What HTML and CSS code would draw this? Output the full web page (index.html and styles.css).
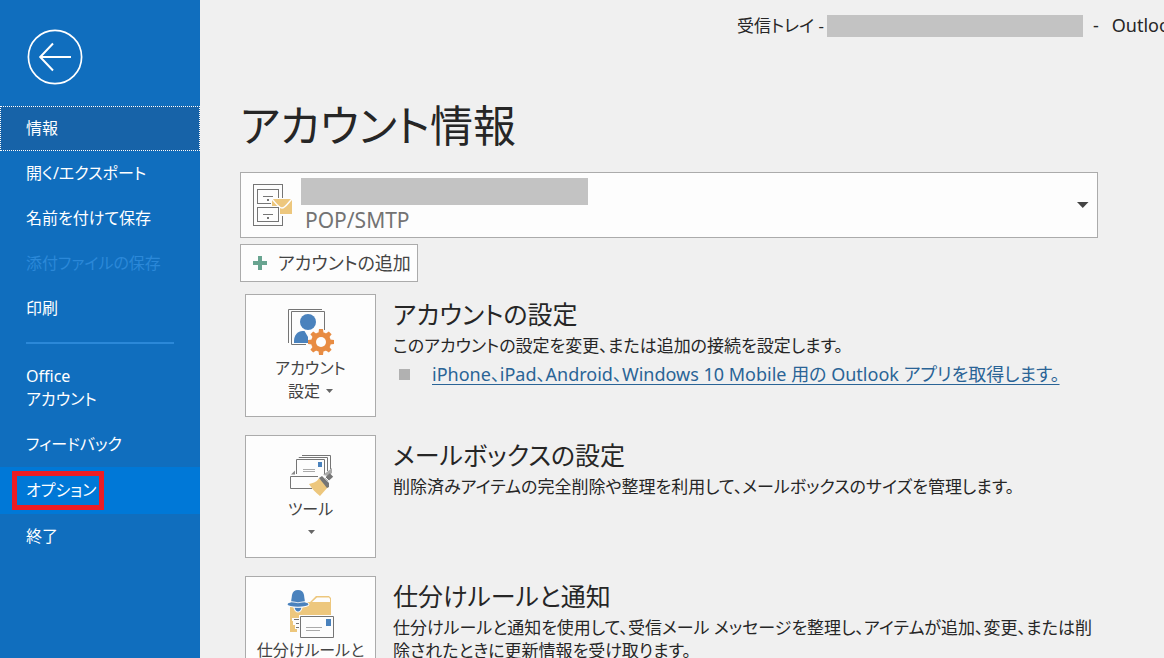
FILE: index.html
```html
<!DOCTYPE html>
<html lang="ja">
<head>
<meta charset="utf-8">
<title>アカウント情報 - Outlook</title>
<link rel="stylesheet" href="styles.css">
</head>
<body>
<div class="app">
  <nav class="sidebar" aria-label="ファイル">
    <button class="back" type="button" aria-label="戻る">
      <svg width="56" height="56" viewBox="0 0 56 56" fill="none" stroke="#fff" stroke-width="1.7">
        <circle cx="28" cy="28" r="26.6"/>
        <path d="M44 28H14M26 14.500L13.200 28L26 41.500" stroke-width="2"/>
      </svg>
    </button>
    <button class="item current" type="button">情報</button>
    <button class="item" type="button">開く/エクスポート</button>
    <button class="item" type="button">名前を付けて保存</button>
    <button class="item" type="button" disabled>添付ファイルの保存</button>
    <button class="item" type="button">印刷</button>
    <hr class="divider">
    <button class="item" type="button">Office<br>アカウント</button>
    <button class="item" type="button">フィードバック</button>
    <button class="item hover" type="button"><span class="marked">オプション</span></button>
    <button class="item" type="button">終了</button>
  </nav>

  <main class="content">
    <header class="titlebar">
      <span class="folder">受信トレイ -</span><span class="mask title-mask"></span><span class="dash">-</span><span>Outlook</span>
    </header>

    <h1 class="heading">アカウント情報</h1>

    <button class="account" type="button">
      <svg width="40" height="44" viewBox="0 0 40 44" fill="none" stroke="#757575">
        <rect x=".5" y="1.500" width="29" height="41"/>
        <rect x="4.500" y="6.500" width="21" height="14"/>
        <path d="M10 13.500h10"/>
        <rect x="14" y="16" width="2" height="2" fill="#757575" stroke="none"/>
        <path d="M18 15h22v18H18z" fill="#fdfdfd" stroke="none"/>
        <path d="M19 16h20v15H19z" fill="#edc77d" stroke="none"/>
        <path d="M18.500 15.500c3 3 7 9.500 10.500 9.500s7-6.500 10.500-9.500" stroke="#fdfdfd" stroke-width="1.500"/>
        <path d="M3 23h24v17H3z" fill="#fdfdfd" stroke="none"/>
        <rect x="4.500" y="24.500" width="21" height="14"/>
        <path d="M10 31.500h10"/>
        <rect x="14" y="34" width="2" height="2" fill="#757575" stroke="none"/>
      </svg>
      <span class="account-text"><span class="mask account-mask"></span><span class="protocol">POP/SMTP</span></span>
      <svg width="12" height="6" viewBox="0 0 12 6"><path d="M0 0h11.500L5.750 6z" fill="#444"/></svg>
    </button>

    <button class="add" type="button">
      <svg width="14" height="14" viewBox="0 0 14 14"><path d="M5 0h4v5h5v4H9v5H5V9H0V5h5z" fill="#68a490"/></svg>
      <span>アカウントの追加</span>
    </button>

    <section class="row">
      <button class="tile" type="button">
        <svg width="48" height="48" viewBox="0 0 48 48" fill="none" stroke="#757575">
          <path d="M1.500 35V1.500H35"/>
          <path d="M19 36.500H4.500V3.500h33V22"/>
          <circle cx="21" cy="14" r="8" fill="#4a82bd" stroke="none"/>
          <path d="M7 35v-2c0-6 4-10 8.500-10h2l3.500 6v6z" fill="#4a82bd" stroke="none"/>
          <g transform="translate(34 34)">
            <circle r="11.500" fill="#fdfdfd" stroke="none"/>
            <g fill="#e88c43" stroke="none">
              <circle r="10"/>
              <path id="tooth" d="M-2.500-9L-2-13H2L2.500-9V9L2 13H-2L-2.500 9z"/>
              <use href="#tooth" transform="rotate(45)"/>
              <use href="#tooth" transform="rotate(90)"/>
              <use href="#tooth" transform="rotate(135)"/>
            </g>
            <circle r="5" fill="#fdfdfd" stroke="none"/>
          </g>
        </svg>
        <span>アカウント<br>設定 <svg class="caret" width="7" height="4" viewBox="0 0 7 4"><path d="M0 0h7L3.500 4z" fill="#666"/></svg></span>
      </button>
      <div class="info">
        <h2>アカウントの設定</h2>
        <p>このアカウントの設定を変更、または追加の接続を設定します。</p>
        <ul><li><a href="#">iPhone、iPad、Android、Windows 10 Mobile 用の Outlook アプリを取得します。</a></li></ul>
      </div>
    </section>

    <section class="row">
      <button class="tile" type="button">
        <svg width="48" height="48" viewBox="0 0 48 48" fill="none" stroke="#757575">
          <path d="M15 6.500h28.500V20M12 9V8.500h28.500V22"/>
          <path d="M9.500 25V10.500h28V25"/>
          <path d="M3.500 27.500V39.500H25M3.500 27.500H31"/>
          <path d="M4 25.500l4-4v4z" fill="#888" stroke="none"/>
          <path d="M31 13h4v5h-4z" fill="#4a82bd" stroke="none"/>
          <path d="M16 20.500h12M16 22.500h12" stroke="#aaa"/>
          <path d="M36 26L45 19v5l-4 3z" fill="#aaa" stroke="none"/>
          <path d="M22 35C27 34 31 32 32 29l9 9-8 9c-4-3-8-7-11-12z" fill="#edc77d" stroke="none"/>
          <path d="M32 29l3-2 7 7v4l-2 1z" fill="#757575" stroke="none"/>
          <path d="M39.500 30.500l5-4.500" stroke-width="5"/>
          <path d="M37 27l6 6" stroke="#fdfdfd"/>
        </svg>
        <span>ツール<br><svg class="caret" width="7" height="4" viewBox="0 0 7 4"><path d="M0 0h7L3.500 4z" fill="#666"/></svg></span>
      </button>
      <div class="info">
        <h2>メールボックスの設定</h2>
        <p>削除済みアイテムの完全削除や整理を利用して、メールボックスのサイズを管理します。</p>
      </div>
    </section>

    <section class="row">
      <button class="tile" type="button">
        <svg width="48" height="48" viewBox="0 0 48 48" fill="none">
          <path d="M3 42V12h20l6-6h13l2 2v34z" fill="#edc77d"/>
          <path d="M25 12l5-4.500h12L43 9v3z" fill="#fdfdfd"/>
          <path d="M5 28h9v14h-4v-3H8v-4H6v-4H5z" fill="#fdfdfd"/>
          <path d="M7 29.500h6M9 33.500h4M9 37.500h4" stroke="#757575"/>
          <g fill="#4a82bd" stroke="#fdfdfd" stroke-width="2" paint-order="stroke">
            <path d="M7.500 17.500h7q-1 4-3.500 4t-3.500-4z"/>
            <ellipse cx="11" cy="14.300" rx="10.500" ry="2.400"/>
            <path d="M4 12.500L5 5Q6 0 11 0T17 5L18 12.500z" stroke="none"/>
            <path d="M4 11.500q7 2.500 14 0" fill="none" stroke-width=".8"/>
          </g>
          <path d="M12 25h36v23H12z" fill="#fdfdfd"/>
          <path d="M13.500 26.500h33v21h-33z" stroke="#757575"/>
          <path d="M39 29h5v7h-5z" fill="#4a82bd"/>
          <path d="M19 37.500h16M19 40.500h14" stroke="#aaa"/>
        </svg>
        <span>仕分けルールと<br>通知</span>
      </button>
      <div class="info">
        <h2>仕分けルールと通知</h2>
        <p>仕分けルールと通知を使用して、受信メール メッセージを整理し、アイテムが追加、変更、または削除されたときに更新情報を受け取ります。</p>
      </div>
    </section>
  </main>
</div>
</body>
</html>
```
FILE: styles.css
```css
* {
  box-sizing: border-box;
}

body {
  margin: 0;
  overflow: hidden;
  background: #f0f0f0;
  color: #262626;
  font-family: "Noto Sans", "Noto Sans CJK JP", sans-serif;
  font-size: 17px;
  line-height: 23px;
  font-feature-settings: "palt";
}

button {
  margin: 0;
  padding: 0;
  border: 0;
  background: none;
  color: inherit;
  font: inherit;
  font-feature-settings: inherit;
}

svg {
  flex: none;
}

.app {
  display: flex;
  height: 100vh;
}

.sidebar {
  display: flex;
  flex: 0 0 200px;
  flex-direction: column;
  background: #106ebe;
  color: #fff;
}

.back {
  align-self: flex-start;
  height: 56px;
  margin: 29px 27px 21px;
}

.item {
  flex: none;
  padding: 11px 26px;
  font-size: 16px;
  text-align: left;
  white-space: nowrap;
}

.item:disabled {
  color: #2b88d8;
}

.current {
  padding: 10px 25px;
  border: 1px dotted #fff;
  background: #1763a8;
  outline: 0;
}

.hover {
  background: #0078d7;
}

.marked {
  display: block;
  width: 92px;
  margin: -7px -14px;
  padding: 3px 8px 3px 9px;
  border: 5px solid #ed1c24;
}

.divider {
  flex: none;
  height: 2px;
  margin: 11px 26px 10px;
  border: 0;
  background: #2b88d8;
}

.content {
  flex: 1;
  min-width: 0;
  padding: 0 66px 0 40px;
}

.titlebar {
  display: flex;
  align-items: center;
  height: 51px;
  margin: 0 -66px 0 497px;
  overflow: hidden;
  font-size: 18px;
  white-space: nowrap;
}

.folder {
  flex: 0 0 90px;
  font-size: 17px;
}

.mask {
  flex: none;
  background: #c3c3c3;
}

.title-mask {
  width: 256px;
  height: 22px;
}

.dash {
  padding: 0 13px 0 10px;
}

.heading {
  margin: 43px 0 14px;
  font-size: 43px;
  font-weight: 400;
  line-height: 64px;
}

.account,
.add,
.tile {
  border: 1px solid #ababab;
  background: #fdfdfd;
  color: #444;
}

.account {
  display: flex;
  align-items: center;
  width: 100%;
  height: 66px;
  padding: 0 8px 0 12px;
}

.account-text {
  display: flex;
  flex: 1;
  flex-direction: column;
  align-items: flex-start;
  margin-left: 8px;
}

.account-mask {
  width: 287px;
  height: 27px;
}

.protocol {
  padding: 4px 4px 0;
  font-size: 21px;
  color: #737373;
}

.add {
  display: flex;
  align-items: center;
  gap: 11px;
  height: 38px;
  margin: 6px 0 12px;
  padding: 0 6px 0 12px;
  font-size: 18px;
}

.row {
  display: flex;
  align-items: flex-start;
  gap: 17px;
  margin: 0 0 18px 5px;
}

.tile {
  display: flex;
  flex: 0 0 131px;
  flex-direction: column;
  align-items: center;
  height: 123px;
  padding-top: 13px;
  font-size: 16px;
}

.tile > span {
  padding-top: 1px;
}

.caret {
  margin: 0 0 4px 2px;
}

.info {
  flex: 1;
  min-width: 0;
}

.info h2 {
  margin: 2px 0;
  font-size: 25px;
  font-weight: 400;
  line-height: 36px;
}

.info p {
  margin: 0;
}

.info ul {
  margin: 6px 0 0;
  padding: 0;
  list-style: none;
}

.info li {
  display: flex;
  align-items: center;
  gap: 22px;
  padding-left: 6px;
  font-size: 18px;
}

.info li::before {
  width: 11px;
  height: 11px;
  background: #b1b1b1;
  content: "";
}

.info a {
  color: #2a6496;
  text-decoration-thickness: 1px;
  text-underline-offset: 3px;
}
```
